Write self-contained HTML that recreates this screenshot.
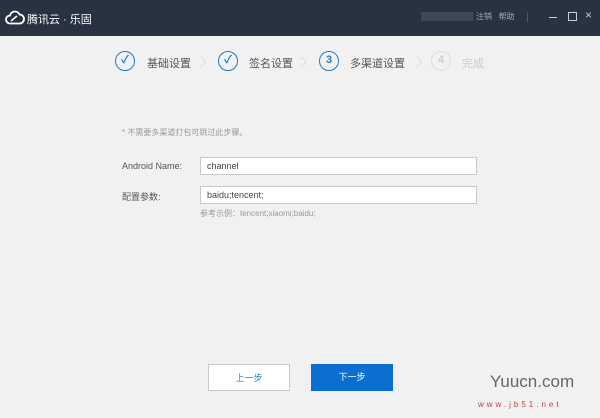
<!DOCTYPE html><html><head><meta charset="utf-8"><style>
body{margin:0;width:600px;height:418px;background:#f1f1f1;font-family:"Liberation Sans","Noto Sans CJK SC",sans-serif;position:relative;overflow:hidden}
.hd{position:absolute;left:0;top:0;width:600px;height:36px;background:#283240}
.a{position:absolute;white-space:nowrap}
.c{position:absolute;width:20px;height:20px;border:1.5px solid #1e7dc7;border-radius:50%;box-sizing:border-box;color:#1e7dc7;font-size:11px;font-weight:bold;text-align:center;line-height:17px}
.st{font-size:11px;color:#555}
.ch{position:absolute;width:7px;height:7px;border-top:1px solid #ddd;border-right:1px solid #ddd;transform:rotate(45deg)}
.in{position:absolute;left:200px;width:277px;height:18px;background:#fff;border:1px solid #c8c8c8;box-sizing:border-box;font-size:9px;color:#444;padding-left:6px;line-height:16px}
.lb{font-size:9px;color:#555}
.bt{position:absolute;top:364px;width:82px;height:27px;box-sizing:border-box;font-size:9px;text-align:center;line-height:26px}
</style></head><body>
<div class="hd">
<svg class="a" style="left:5px;top:10px" width="20" height="15" viewBox="0 0 20 15"><path d="M5 13.5a4 4 0 0 1 0-8 5 5 0 0 1 9.5-1 4.5 4.5 0 0 1 0 9z" fill="none" stroke="#fff" stroke-width="1.8"/><path d="M6 11l6-5" stroke="#fff" stroke-width="1.6"/></svg>
<div class="a" style="left:27px;top:11px;color:#fff;font-size:11px">腾讯云 · 乐固</div>
<div class="a" style="left:421px;top:12px;width:52px;height:9px;background:#3e4856"></div>
<div class="a" style="left:476px;top:11px;color:#aab;font-size:8px">注销&nbsp;&nbsp;&nbsp;帮助</div>
<div class="a" style="left:527px;top:12px;width:1px;height:10px;background:#556"></div>
<div class="a" style="left:549px;top:17px;width:8px;height:1px;background:#ccc"></div>
<div class="a" style="left:568px;top:12px;width:7px;height:7px;border:1px solid #ccc"></div>
<div class="a" style="left:585px;top:8px;color:#ccc;font-size:12px">×</div>
</div>
<div class="c" style="left:115px;top:51px">✓</div><div class="a st" style="left:147px;top:55px">基础设置</div><div class="ch" style="left:197px;top:58px"></div>
<div class="c" style="left:218px;top:51px">✓</div><div class="a st" style="left:249px;top:55px">签名设置</div><div class="ch" style="left:297px;top:58px"></div>
<div class="c" style="left:319px;top:51px">3</div><div class="a st" style="left:350px;top:55px">多渠道设置</div><div class="ch" style="left:413px;top:58px"></div>
<div class="c" style="left:431px;top:51px;border-color:#ddd;color:#ccc">4</div><div class="a st" style="left:462px;top:55px;color:#ccc">完成</div>
<div class="a" style="left:122px;top:127px;font-size:8px;color:#999">* 不需要多渠道打包可跳过此步骤。</div>
<div class="a lb" style="left:122px;top:161px">Android Name:</div>
<div class="in" style="top:157px">channel</div>
<div class="a lb" style="left:122px;top:190px">配置参数:</div>
<div class="in" style="top:186px">baidu;tencent;</div>
<div class="a" style="left:200px;top:208px;font-size:8px;color:#999">参考示例：tencent;xiaomi;baidu;</div>
<div class="bt" style="left:208px;background:#fff;border:1px solid #c8c8c8;color:#1e7dc7">上一步</div>
<div class="bt" style="left:311px;background:#0a6fd0;color:#fff">下一步</div>
<div class="a" style="left:490px;top:372px;font-size:17px;color:#666">Yuucn.com</div>
<div class="a" style="left:478px;top:400px;font-size:8px;color:#b44;letter-spacing:3px">www.jb51.net</div>
</body></html>
